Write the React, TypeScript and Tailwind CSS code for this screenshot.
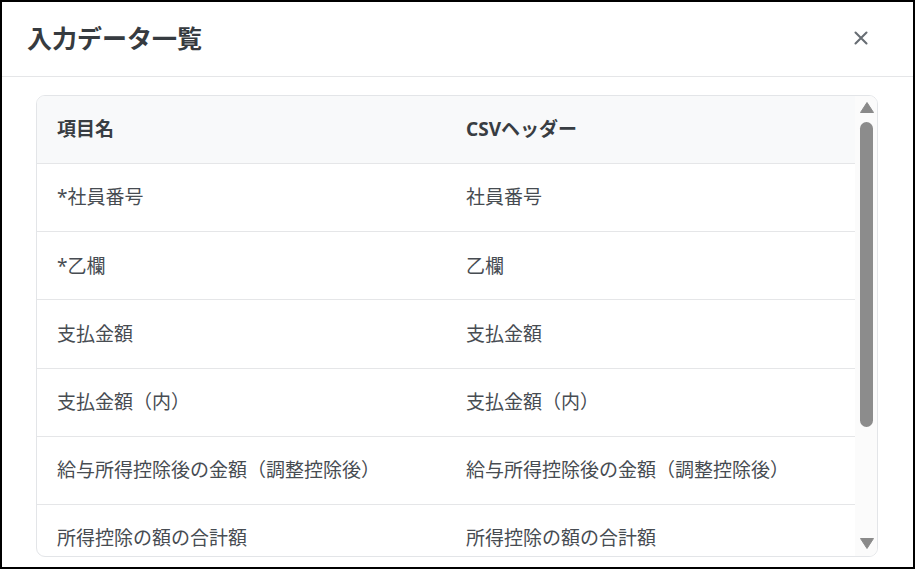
import React from "react";

const rows = [
  ["*社員番号", "社員番号"],
  ["*乙欄", "乙欄"],
  ["支払金額", "支払金額"],
  ["支払金額（内）", "支払金額（内）"],
  ["給与所得控除後の金額（調整控除後）", "給与所得控除後の金額（調整控除後）"],
  ["所得控除の額の合計額", "所得控除の額の合計額"],
];

export default function App() {
  return (
    <div
      className="w-[915px] h-[569px] border-2 border-black bg-white flex flex-col overflow-hidden"
      style={{ fontFamily: '"Noto Sans", "Noto Sans CJK JP", sans-serif' }}
    >
      <div className="h-[75px] shrink-0 border-b border-[#e5e6e8] flex items-center justify-between pl-[25px] pr-[45px]">
        <h2 className="text-[25px] font-bold text-[#363b40] leading-none -mt-[2px]">入力データ一覧</h2>
        <svg width="14" height="14" viewBox="0 0 14 14" className="text-[#676d73] -mt-[2px]">
          <path d="M1.5 1.5 L12.5 12.5 M12.5 1.5 L1.5 12.5" stroke="currentColor" strokeWidth="2.1" strokeLinecap="round" />
        </svg>
      </div>
      <div className="flex-1 min-h-0 pl-[34px] pr-[35px] pt-[18px]">
        <div className="h-[462px] border border-[#e3e5e8] rounded-[9px] flex overflow-hidden">
          <div className="flex-1 min-w-0 overflow-hidden">
            <div className="h-[68px] bg-[#f8f9fa] border-b border-[#e5e6e8] grid grid-cols-2 items-center">
              <div className="pl-[20px] text-[19px] font-bold text-[#383d42]">項目名</div>
              <div className="pl-[20px] text-[19px] font-bold text-[#383d42]">CSVヘッダー</div>
            </div>
            {rows.map((r, i) => (
              <div key={i} className="h-[68.2px] shrink-0 border-b border-[#e5e6e8] grid grid-cols-2 items-center">
                <div className="pl-[20px] text-[19px] text-[#474c52] whitespace-nowrap">{r[0]}</div>
                <div className="pl-[20px] text-[19px] text-[#474c52] whitespace-nowrap">{r[1]}</div>
              </div>
            ))}
          </div>
          <div className="w-[22px] shrink-0 bg-[#fbfbfb] flex flex-col items-center pt-[6px] pb-[6px]">
            <svg width="14" height="11" viewBox="0 0 14 11" className="shrink-0 ml-[1px]">
              <path d="M7 0.5 L13.5 10.5 L0.5 10.5 Z" fill="#8a8a8a" stroke="#8a8a8a" strokeLinejoin="round" />
            </svg>
            <div className="mt-[9px] w-[13px] h-[305px] rounded-full bg-[#8c8c8c] ml-[1px]" />
            <div className="flex-1" />
            <svg width="14" height="11" viewBox="0 0 14 11" className="shrink-0 ml-[1px] mb-[1px]">
              <path d="M0.5 0.5 L13.5 0.5 L7 10.5 Z" fill="#8a8a8a" stroke="#8a8a8a" strokeLinejoin="round" />
            </svg>
          </div>
        </div>
      </div>
    </div>
  );
}
